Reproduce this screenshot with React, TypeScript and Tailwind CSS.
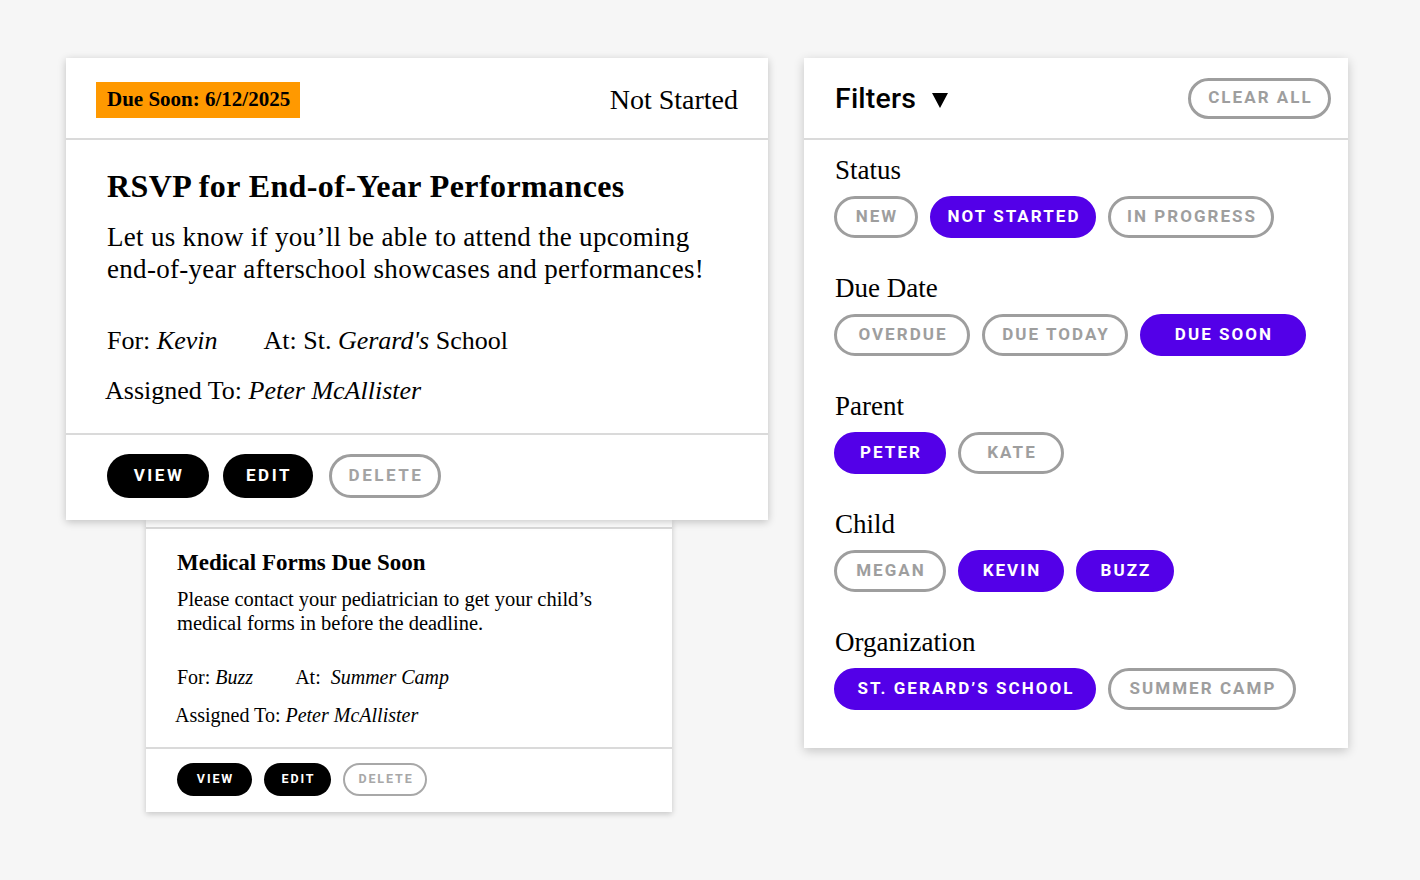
const serif = { fontFamily: '"Liberation Serif", "Times New Roman", serif' };

type Chip = { label: string; w: string; on?: boolean };

const sections: { title: string; chips: Chip[] }[] = [
  {
    title: "Status",
    chips: [
      { label: "NEW", w: "w-[84px]" },
      { label: "NOT STARTED", w: "w-[166px]", on: true },
      { label: "IN PROGRESS", w: "w-[166px]" },
    ],
  },
  {
    title: "Due Date",
    chips: [
      { label: "OVERDUE", w: "w-[136px]" },
      { label: "DUE TODAY", w: "w-[146px]" },
      { label: "DUE SOON", w: "w-[166px]", on: true },
    ],
  },
  {
    title: "Parent",
    chips: [
      { label: "PETER", w: "w-[112px]", on: true },
      { label: "KATE", w: "w-[106px]" },
    ],
  },
  {
    title: "Child",
    chips: [
      { label: "MEGAN", w: "w-[112px]" },
      { label: "KEVIN", w: "w-[106px]", on: true },
      { label: "BUZZ", w: "w-[98px]", on: true },
    ],
  },
  {
    title: "Organization",
    chips: [
      { label: "ST. GERARD’S SCHOOL", w: "w-[262px]", on: true },
      { label: "SUMMER CAMP", w: "w-[188px]" },
    ],
  },
];

function Pill({ label, w, on }: Chip) {
  return (
    <span
      className={`flex h-[42px] items-center justify-center rounded-full border-[3px] pl-[2px] text-[17px] font-bold tracking-[0.12em] ${w} ${
        on ? "border-[#5300e8] bg-[#5300e8] text-white" : "border-[#9e9e9e] bg-white text-[#9e9e9e]"
      }`}
    >
      {label}
    </span>
  );
}

function BigButtons() {
  return (
    <div className="flex gap-[14px] font-bold text-[17px] tracking-[0.15em]">
      <span className="flex h-[44px] w-[102px] items-center justify-center rounded-full bg-black pl-[2px] text-white">VIEW</span>
      <span className="flex h-[44px] w-[90px] items-center justify-center rounded-full bg-black pl-[2px] text-white">EDIT</span>
      <span className="ml-[2px] flex h-[44px] w-[112px] items-center justify-center rounded-full border-[3px] border-[#9e9e9e] pl-[2px] text-[#a3a3a3]">
        DELETE
      </span>
    </div>
  );
}

function SmallButtons() {
  return (
    <div className="flex gap-[12px] font-bold text-[12.5px] tracking-[0.15em]">
      <span className="flex h-[33px] w-[75px] items-center justify-center rounded-full bg-black pl-[2px] text-white">VIEW</span>
      <span className="flex h-[33px] w-[67px] items-center justify-center rounded-full bg-black pl-[2px] text-white">EDIT</span>
      <span className="flex h-[33px] w-[84px] items-center justify-center rounded-full border-2 border-[#a8a8a8] pl-[2px] text-[#a8a8a8]">
        DELETE
      </span>
    </div>
  );
}

export default function App() {
  return (
    <div
      className="flex min-h-screen items-start gap-[36px] bg-[#f6f6f6] pl-[66px] pt-[58px] text-black"
      style={{ fontFamily: 'Roboto, "Liberation Sans", sans-serif' }}
    >
      {/* Task cards */}
      <div className="flex w-[702px] flex-col">
        <div className="relative z-10 bg-white shadow-[0_2px_8px_rgba(0,0,0,0.22)]">
          <div className="flex h-[82px] items-center justify-between border-b-2 border-[#dadada] pl-[30px] pr-[30px] pt-[4px]" style={serif}>
            <span className="flex h-[36px] w-[204px] items-center bg-[#ff9900] pl-[11px] text-[21px] font-bold">
              Due Soon: 6/12/2025
            </span>
            <span className="text-[28px]">Not Started</span>
          </div>
          <div className="border-b-2 border-[#dadada] pb-[26px] pl-[41px] pt-[26px]" style={serif}>
            <h1 className="text-[32px] font-bold leading-[40px] tracking-[0.4px]">RSVP for End-of-Year Performances</h1>
            <p className="mt-[15px] text-[27px] leading-[32px] tracking-[0.3px]">
              Let us know if you’ll be able to attend the upcoming
              <br />
              end-of-year afterschool showcases and performances!
            </p>
            <div className="mt-[40px] flex gap-[46px] text-[26px] leading-[32px]">
              <span>
                For: <i>Kevin</i>
              </span>
              <span>
                At: St. <i>Gerard's</i> School
              </span>
            </div>
            <div className="-ml-[2px] mt-[18px] text-[26px] leading-[32px]">
              Assigned To: <i>Peter McAllister</i>
            </div>
          </div>
          <div className="pb-[22px] pl-[41px] pt-[19px]">
            <BigButtons />
          </div>
        </div>

        <div className="ml-[80px] w-[526px] bg-white shadow-[0_2px_6px_rgba(0,0,0,0.2)]">
          <div className="h-[9px] border-b-2 border-[#dadada]" />
          <div className="border-b-2 border-[#dadada] pb-[20px] pl-[31px] pt-[20px]" style={serif}>
            <h2 className="text-[23px] font-bold leading-[28px]">Medical Forms Due Soon</h2>
            <p className="mt-[10px] text-[20.5px] leading-[24px]">
              Please contact your pediatrician to get your child’s
              <br />
              medical forms in before the deadline.
            </p>
            <div className="mt-[30px] flex gap-[42px] text-[20px] leading-[24px]">
              <span>
                For: <i>Buzz</i>
              </span>
              <span>
                At:<i className="ml-[10px]">Summer Camp</i>
              </span>
            </div>
            <div className="-ml-[2px] mt-[14px] text-[20px] leading-[24px]">
              Assigned To: <i>Peter McAllister</i>
            </div>
          </div>
          <div className="pb-[16px] pl-[31px] pt-[14px]">
            <SmallButtons />
          </div>
        </div>
      </div>

      {/* Filters panel */}
      <div className="w-[544px] bg-white pb-[38px] shadow-[0_3px_10px_rgba(0,0,0,0.2)]">
        <div className="flex h-[82px] items-center justify-between border-b-2 border-[#dadada] pl-[31px] pr-[17px]">
          <div className="flex items-center gap-[16px] pt-[2px]">
            <span className="text-[28.5px] font-medium tracking-[0.2px]">Filters</span>
            <svg width="16" height="15" viewBox="0 0 16 15" className="mt-[2px]">
              <polygon points="0,0 16,0 8,15" fill="black" />
            </svg>
          </div>
          <span className="flex h-[41px] w-[143px] items-center justify-center rounded-full border-[3px] border-[#9e9e9e] pl-[2px] text-[17px] font-bold tracking-[0.12em] text-[#9e9e9e]">
            CLEAR ALL
          </span>
        </div>
        <div className="flex flex-col gap-[34px] pl-[30px] pt-[14px]">
          {sections.map((s) => (
            <div key={s.title}>
              <div className="pl-[1px] text-[27px] leading-[32px]" style={serif}>
                {s.title}
              </div>
              <div className="mt-[10px] flex gap-[12px]">
                {s.chips.map((c) => (
                  <Pill key={c.label} {...c} />
                ))}
              </div>
            </div>
          ))}
        </div>
      </div>
    </div>
  );
}
